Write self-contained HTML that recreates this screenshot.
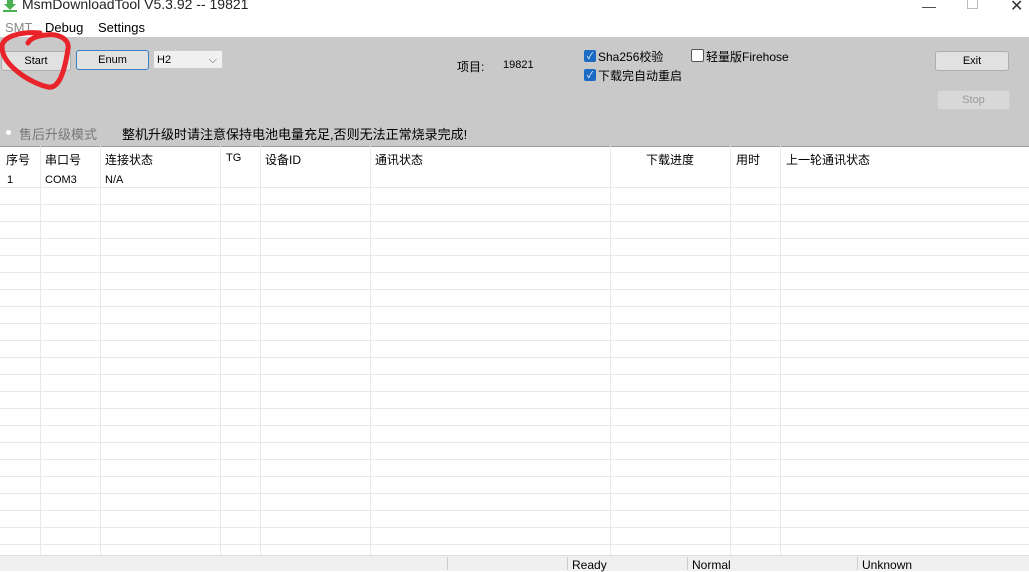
<!DOCTYPE html><html><head><style>
body{margin:0;width:1029px;height:570px;overflow:hidden;background:#fff;font-family:"Liberation Sans","Noto Sans CJK SC",sans-serif;font-size:12px;color:#000;position:relative}
.a{position:absolute;white-space:nowrap}
.btn{position:absolute;background:#e1e1e1;border:1px solid #adadad;border-radius:3px;text-align:center;font-size:11px;line-height:18px}
.vl{position:absolute;top:146px;height:409px;width:1px;background:#e8e8e8}
.cb{position:absolute;width:12px;height:12px;background:#1b6bc4;border-radius:2px;color:#fff;font-size:9px;line-height:12px;text-align:center}
</style></head><body>
<svg class="a" style="left:2px;top:0" width="16" height="12"><path d="M5 0h6v4h3l-6 6-6-6h3z" fill="#4caf50"/><rect x="1" y="10" width="14" height="2" fill="#4caf50"/></svg>
<div class="a" style="left:22px;top:-4px;font-size:14px;color:#222">MsmDownloadTool V5.3.92 -- 19821</div>
<div class="a" style="left:922px;top:-2px;font-size:14px;color:#444">—</div>
<div class="a" style="left:967px;top:0;width:9px;height:8px;border:1px solid #bbb;border-top:none"></div>
<div class="a" style="left:1010px;top:-4px;font-size:16px;color:#333">✕</div>
<div class="a" style="left:5px;top:20px;font-size:13px;color:#888">SMT</div>
<div class="a" style="left:45px;top:20px;font-size:13px">Debug</div>
<div class="a" style="left:98px;top:20px;font-size:13px">Settings</div>
<div class="a" style="left:0;top:37px;width:1029px;height:109px;background:#c9c9c9;border-bottom:1px solid #999"></div>
<div class="btn" style="left:1px;top:51px;width:68px">Start</div>
<div class="btn" style="left:76px;top:50px;width:71px;border-color:#3b7fc4">Enum</div>
<div class="a" style="left:153px;top:50px;width:70px;height:19px;background:#f0f0f0;border:1px solid #ccc;font-size:11px;line-height:19px;padding-left:3px;box-sizing:border-box">H2<span style="position:absolute;right:5px;color:#555">⌵</span></div>
<div class="a" style="left:457px;top:58px;font-size:12px">项目:</div>
<div class="a" style="left:503px;top:59px;font-size:11px">19821</div>
<div class="cb" style="left:584px;top:50px">✓</div><div class="a" style="left:598px;top:48px;font-size:12px">Sha256校验</div>
<div class="cb" style="left:584px;top:69px">✓</div><div class="a" style="left:598px;top:67px;font-size:12px">下载完自动重启</div>
<div class="a" style="left:691px;top:49px;width:11px;height:11px;background:#fff;border:1px solid #555;border-radius:2px"></div><div class="a" style="left:706px;top:48px;font-size:12px">轻量版Firehose</div>
<div class="btn" style="left:935px;top:51px;width:72px">Exit</div>
<div class="btn" style="left:937px;top:90px;width:71px;color:#999;border-color:#ccc;background:#d8d8d8">Stop</div>
<div class="a" style="left:6px;top:130px;width:5px;height:5px;border-radius:50%;background:#fff"></div>
<div class="a" style="left:19px;top:124px;font-size:13px;color:#777">售后升级模式</div>
<div class="a" style="left:122px;top:124px;font-size:13px">整机升级时请注意保持电池电量充足,否则无法正常烧录完成!</div>
<div style="position:absolute;left:0;top:187px;width:1029px;height:368px;background:repeating-linear-gradient(#e8e8e8 0 1px,#fff 1px 17px)"></div>
<div class="vl" style="left:40px"></div><div class="vl" style="left:100px"></div><div class="vl" style="left:220px"></div><div class="vl" style="left:260px"></div><div class="vl" style="left:370px"></div><div class="vl" style="left:610px"></div><div class="vl" style="left:730px"></div><div class="vl" style="left:780px"></div>
<div class="a" style="left:6px;top:151px;font-size:12px">序号</div>
<div class="a" style="left:45px;top:151px">串口号</div>
<div class="a" style="left:105px;top:151px">连接状态</div>
<div class="a" style="left:226px;top:152px;font-size:11px">TG</div>
<div class="a" style="left:265px;top:151px">设备ID</div>
<div class="a" style="left:375px;top:151px">通讯状态</div>
<div class="a" style="left:646px;top:151px">下载进度</div>
<div class="a" style="left:736px;top:151px">用时</div>
<div class="a" style="left:786px;top:151px">上一轮通讯状态</div>
<div class="a" style="left:7px;top:174px;font-size:11px">1</div>
<div class="a" style="left:45px;top:174px;font-size:11px">COM3</div>
<div class="a" style="left:105px;top:174px;font-size:11px">N/A</div>
<div class="a" style="left:0;top:555px;width:1029px;height:15px;background:#f0f0f0;border-top:1px solid #ddd"></div>
<div class="a" style="left:447px;top:557px;width:1px;height:13px;background:#ccc"></div>
<div class="a" style="left:567px;top:557px;width:1px;height:13px;background:#ccc"></div>
<div class="a" style="left:687px;top:557px;width:1px;height:13px;background:#ccc"></div>
<div class="a" style="left:857px;top:557px;width:1px;height:13px;background:#ccc"></div>
<div class="a" style="left:572px;top:558px;font-size:12px">Ready</div>
<div class="a" style="left:692px;top:558px;font-size:12px">Normal</div>
<div class="a" style="left:862px;top:558px;font-size:12px">Unknown</div>
<svg class="a" style="left:0;top:25px" width="80" height="70"><path d="M40 8 C20 6 2 12 2 22 C2 40 30 58 48 62 C58 64 64 50 68 24 C70 14 58 8 46 10 C36 11 30 14 28 18" fill="none" stroke="#e8232a" stroke-width="5" stroke-linecap="round"/></svg>
</body></html>
